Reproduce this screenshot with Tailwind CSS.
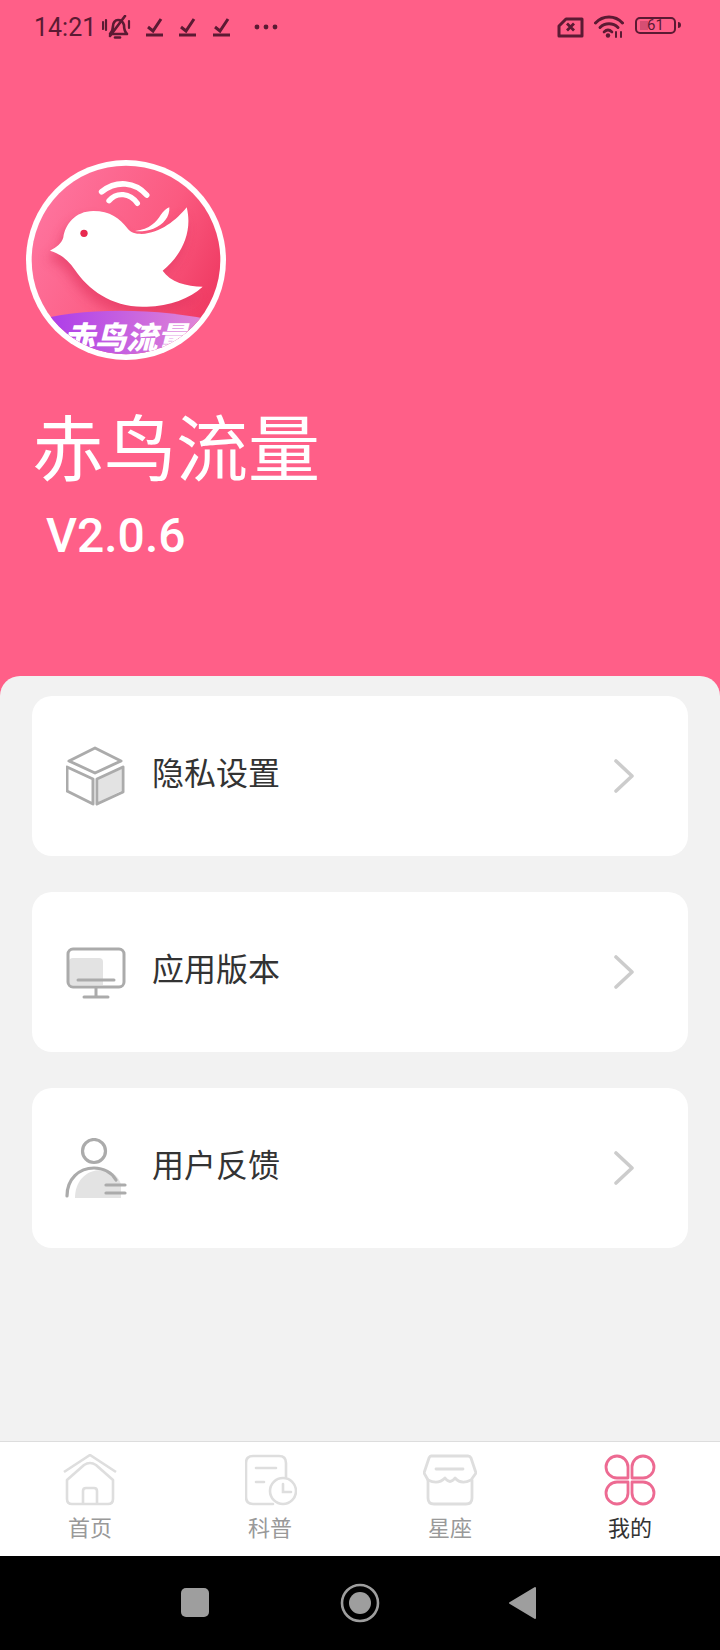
<!DOCTYPE html>
<html lang="zh-CN">
<head>
  <meta charset="UTF-8">
  <meta name="viewport" content="width=device-width, initial-scale=1.0">
  <title>赤鸟流量</title>
  <script src="https://cdn.jsdelivr.net/npm/@tailwindcss/browser@4"></script>
</head>
<body class="bg-black font-['Roboto','Noto_Sans_CJK_SC',sans-serif]">
<div class="w-[720px] h-[1650px] flex flex-col overflow-hidden">

  <!-- Pink header -->
  <header class="h-[696px] shrink-0 bg-[#ff5f88] flex flex-col">
    <!-- Status bar -->
    <div class="h-[54px] pl-[34px] pr-[39px] flex items-center justify-between text-[#5b1a33]">
      <div class="flex items-center">
        <span class="text-[25px] leading-none w-[68px]">14:21</span>
        <svg class="w-[29px] h-[24px]" viewBox="0 0 29 24" fill="none" stroke="currentColor" stroke-width="2.6" stroke-linecap="round" stroke-linejoin="round">
          <path d="M8 19c2-2 3-5 3-8 0-3 2-6 5-6 3 0 5 2 6 5 0 4 1 7 3 9z"/>
          <path d="M13 22.5h5"/>
          <path d="M8 21 23 1"/>
          <path d="M1 7v7M4 5v10M27 6v7" stroke-width="2.2"/>
        </svg>
        <svg class="w-[18px] h-[20px] ml-[15px]" viewBox="0 0 18 20" fill="none" stroke="currentColor" stroke-width="3"><path d="M2 10l5 4 8-12"/><path d="M0 18h17"/></svg>
        <svg class="w-[18px] h-[20px] ml-[15px]" viewBox="0 0 18 20" fill="none" stroke="currentColor" stroke-width="3"><path d="M2 10l5 4 8-12"/><path d="M0 18h17"/></svg>
        <svg class="w-[18px] h-[20px] ml-[16px]" viewBox="0 0 18 20" fill="none" stroke="currentColor" stroke-width="3"><path d="M2 10l5 4 8-12"/><path d="M0 18h17"/></svg>
        <svg class="w-[24px] h-[6px] ml-[23px]" viewBox="0 0 24 6" fill="currentColor"><circle cx="3" cy="3" r="2.4"/><circle cx="12" cy="3" r="2.4"/><circle cx="21" cy="3" r="2.4"/></svg>
      </div>
      <div class="flex items-center">
        <svg class="w-[27px] h-[21px]" viewBox="0 0 27 21" fill="none" stroke="currentColor" stroke-width="3" stroke-linejoin="round"><path d="M9 2h16v17H2V9z"/><path d="M10 6.500l7 7M17 6.500l-7 7" stroke-width="2.8"/></svg>
        <svg class="w-[30px] h-[23px] ml-[10px] -mt-[1px]" viewBox="0 0 30 23" fill="none" stroke="currentColor" stroke-width="3" stroke-linecap="round">
          <path d="M1.500 8C9 0 21 0 28.500 8"/><path d="M6 12.500c5-5 13-5 18 0"/>
          <path d="M10 17c2.500-2.500 5.500-2.500 8 0" stroke-width="2.600"/>
          <circle cx="14" cy="20.500" r="2.200" fill="currentColor" stroke="none"/>
          <path d="M22 17v5M27 17v5" stroke-width="2"/>
        </svg>
        <div class="ml-[11px] -mt-[4px] w-[41px] h-[17px] border-2 border-[#5b1a33] rounded-[5px] flex items-center justify-center text-[15px] leading-none relative">
          <span class="absolute left-[3px] top-[2px] w-[8px] h-[9px] bg-[#5b1a33]/25"></span>
          <span class="relative mt-[1px]">61</span>
        </div>
        <span class="-mt-[4px] ml-[2px] w-[3px] h-[6px] bg-[#5b1a33] rounded-r-sm"></span>
      </div>
    </div>

    <!-- App logo -->
    <svg class="w-[200px] h-[200px] ml-[26px] mt-[106px]" viewBox="48 30 600 600">
      <defs>
        <linearGradient id="logoBg" x1="0" y1="0.1" x2="1" y2="0.6">
          <stop offset="0" stop-color="#ff78a3"/>
          <stop offset="0.65" stop-color="#fb5a80"/>
          <stop offset="1" stop-color="#ef3a62"/>
        </linearGradient>
        <linearGradient id="logoBand" x1="0" y1="0" x2="1" y2="0">
          <stop offset="0" stop-color="#a532ec"/>
          <stop offset="1" stop-color="#e892d3"/>
        </linearGradient>
        <filter id="logoShadow" x="-20%" y="-20%" width="140%" height="140%"><feGaussianBlur stdDeviation="16"/></filter>
        <clipPath id="logoClip"><circle cx="348" cy="330" r="283"/></clipPath>
      </defs>
      <circle cx="348" cy="330" r="300" fill="#ffffff"/>
      <g clip-path="url(#logoClip)">
        <rect x="48" y="30" width="600" height="600" fill="url(#logoBg)"/>
        <path transform="translate(-10 24)" fill="#e0345f" opacity="0.6" filter="url(#logoShadow)" d="M120 302C150 310 175 330 195 360 235 420 310 475 410 470 480 468 540 445 578 410 530 410 480 395 458 362 510 320 550 250 530 172 500 210 450 250 395 252 375 252 362 248 352 235 330 205 300 183 250 183 195 183 165 225 160 262 155 280 140 292 120 302Z"/>
        <path d="M275 125C320 90 375 95 410 135" fill="none" stroke="#fff" stroke-width="17" stroke-linecap="round"/>
        <path d="M297 152C320 125 360 128 382 160" fill="none" stroke="#fff" stroke-width="16" stroke-linecap="round"/>
        <path fill="#fff" d="M375 243C420 238 440 215 452 195 460 183 470 175 478 172 480 200 460 225 430 236 410 243 390 245 375 243Z"/>
        <path fill="#fff" d="M120 302C150 310 175 330 195 360 235 420 310 475 410 470 480 468 540 445 578 410 530 410 480 395 458 362 510 320 550 250 530 172 500 210 450 250 395 252 375 252 362 248 352 235 330 205 300 183 250 183 195 183 165 225 160 262 155 280 140 292 120 302Z"/>
        <circle cx="222" cy="250" r="11" fill="#e8294f"/>
        <path fill="url(#logoBand)" d="M48 520C200 470 450 470 648 520V630H48Z"/>
        <text x="348" y="596" text-anchor="middle" font-size="94" font-weight="900" font-style="italic" fill="#fff" font-family="'Noto Sans CJK SC',sans-serif">赤鸟流量</text>
      </g>
    </svg>

    <h1 class="ml-[32px] mt-[49px] text-[72px] leading-[84px] font-normal text-white">赤鸟流量</h1>
    <p class="ml-[46px] mt-[15px] text-[48px] leading-[56px] font-medium text-white">V2.0.6</p>
  </header>

  <!-- Content -->
  <main class="-mt-[20px] h-[765px] shrink-0 bg-[#f2f2f2] rounded-t-[20px] pt-[20px] px-[32px] flex flex-col gap-[36px]">

    <div class="h-[160px] bg-white rounded-[20px] flex items-center pl-[34px] pr-[54px]">
      <svg class="w-[60px] h-[60px]" viewBox="0 0 60 60" fill="none" stroke="#ababab" stroke-width="3" stroke-linejoin="round">
        <path fill="#e3e3e3" stroke="none" d="M33 33l22-10v22L33 56z"/>
        <path d="M29 2l26 13-26 12L3 15z"/>
        <path d="M1 21l26 12v25L1 45zM31 33l26-12v25L31 58z"/>
      </svg>
      <span class="ml-[26px] text-[32px] leading-none text-[#333] flex-1 -mt-[5px]">隐私设置</span>
      <svg class="w-[20px] h-[34px]" viewBox="0 0 20 34" fill="none" stroke="#cccccc" stroke-width="3.6" stroke-linecap="round" stroke-linejoin="round"><path d="M2 2l16 15L2 32"/></svg>
    </div>

    <div class="h-[160px] bg-white rounded-[20px] flex items-center pl-[34px] pr-[54px]">
      <svg class="w-[60px] h-[52px] mt-[1px]" viewBox="0 0 60 52" fill="none" stroke="#ababab" stroke-width="3" stroke-linecap="round">
        <path fill="#e3e3e3" stroke="none" d="M3 15q0-4 4-4h26q4 0 4 4v23H3z"/>
        <rect x="2" y="2" width="56" height="38" rx="5"/>
        <path d="M12 33h36M30 41v8M18 50h24"/>
      </svg>
      <span class="ml-[26px] text-[32px] leading-none text-[#333] flex-1 -mt-[5px]">应用版本</span>
      <svg class="w-[20px] h-[34px]" viewBox="0 0 20 34" fill="none" stroke="#cccccc" stroke-width="3.6" stroke-linecap="round" stroke-linejoin="round"><path d="M2 2l16 15L2 32"/></svg>
    </div>

    <div class="h-[160px] bg-white rounded-[20px] flex items-center pl-[33px] pr-[54px]">
      <svg class="w-[62px] h-[60px]" viewBox="0 0 62 60" fill="none" stroke="#ababab" stroke-width="3.2" stroke-linecap="round">
        <path fill="#e3e3e3" stroke="none" d="M10 60c0-17 11-28 26-28 9 0 16 4 20 14v14z"/>
        <circle cx="29" cy="13" r="11.5"/>
        <path d="M2 58c0-17 12-28 27-28 10 0 18 5 22 12"/>
        <path d="M41 47h19M41 55h19"/>
      </svg>
      <span class="ml-[25px] text-[32px] leading-none text-[#333] flex-1 -mt-[5px]">用户反馈</span>
      <svg class="w-[20px] h-[34px]" viewBox="0 0 20 34" fill="none" stroke="#cccccc" stroke-width="3.6" stroke-linecap="round" stroke-linejoin="round"><path d="M2 2l16 15L2 32"/></svg>
    </div>
  </main>

  <!-- Tab bar -->
  <nav class="h-[115px] shrink-0 bg-white border-t border-[#dddddd] grid grid-cols-4 text-[22px] leading-[26px] text-[#999]">
    <div class="flex flex-col items-center pt-[12px]">
      <svg class="w-[54px] h-[52px]" viewBox="0 0 54 52" fill="none" stroke="#dedede" stroke-width="2.6" stroke-linejoin="round">
        <path d="M1 18L27 1l26 17"/>
        <path d="M4 26L21 11q6-4 12 0l17 15v19q0 5-5 5H9q-5 0-5-5z"/>
        <path d="M20 50V37q0-3 3-3h8q3 0 3 3v13"/>
      </svg>
      <span class="mt-[10px]">首页</span>
    </div>
    <div class="flex flex-col items-center pt-[12px]">
      <svg class="w-[52px] h-[52px] ml-[2px]" viewBox="0 0 52 52" fill="none" stroke="#dedede" stroke-width="2.6" stroke-linecap="round">
        <path d="M28 50H8q-7 0-7-7V9q0-7 7-7h26q7 0 7 7v14"/>
        <path d="M11 14h20M11 28h8"/>
        <circle cx="38" cy="37" r="13" fill="#fff"/>
        <path d="M38 30v8h8"/>
      </svg>
      <span class="mt-[10px]">科普</span>
    </div>
    <div class="flex flex-col items-center pt-[12px]">
      <svg class="w-[54px] h-[52px]" viewBox="0 0 54 52" fill="none" stroke="#dedede" stroke-width="2.8" stroke-linecap="round" stroke-linejoin="round">
        <path d="M8 2h37q2 0 3 2l5 15-5 7Q38 31 32 24 27 31 22 24 15 31 5 26l-4-7L6 4q1-2 2-2z"/>
        <path d="M5 26v18q0 6 6 6h32q6 0 6-6V26"/>
        <path d="M13 15h27"/>
      </svg>
      <span class="mt-[10px]">星座</span>
    </div>
    <div class="flex flex-col items-center pt-[12px] text-[#333]">
      <svg class="w-[52px] h-[52px]" viewBox="0 0 52 52" fill="none" stroke="#ed6a92" stroke-width="2.8" stroke-linejoin="round">
        <path d="M24 24H13A11 11 0 1 1 24 13z"/>
        <path d="M28 24h11A11 11 0 1 0 28 13z"/>
        <path d="M24 28H13A11 11 0 1 0 24 39z"/>
        <path d="M28 28h11A11 11 0 1 1 28 39z"/>
      </svg>
      <span class="mt-[10px]">我的</span>
    </div>
  </nav>

  <!-- Android nav -->
  <div class="flex-1 bg-black relative">
    <span class="absolute left-[181px] top-[32px] w-[28px] h-[29px] rounded-[5px] bg-[#9e9e9e]"></span>
    <svg class="absolute left-[340px] top-[27px] w-[40px] h-[40px]" viewBox="0 0 40 40"><circle cx="20" cy="20" r="18" fill="none" stroke="#9e9e9e" stroke-width="2.6"/><circle cx="20" cy="20" r="11" fill="#9e9e9e"/></svg>
    <svg class="absolute left-[509px] top-[30px] w-[28px] h-[34px]" viewBox="0 0 28 34"><path fill="#9e9e9e" stroke="#9e9e9e" stroke-width="2" stroke-linejoin="round" d="M1 17L26 2v30z"/></svg>
  </div>
</div>
</body>
</html>
